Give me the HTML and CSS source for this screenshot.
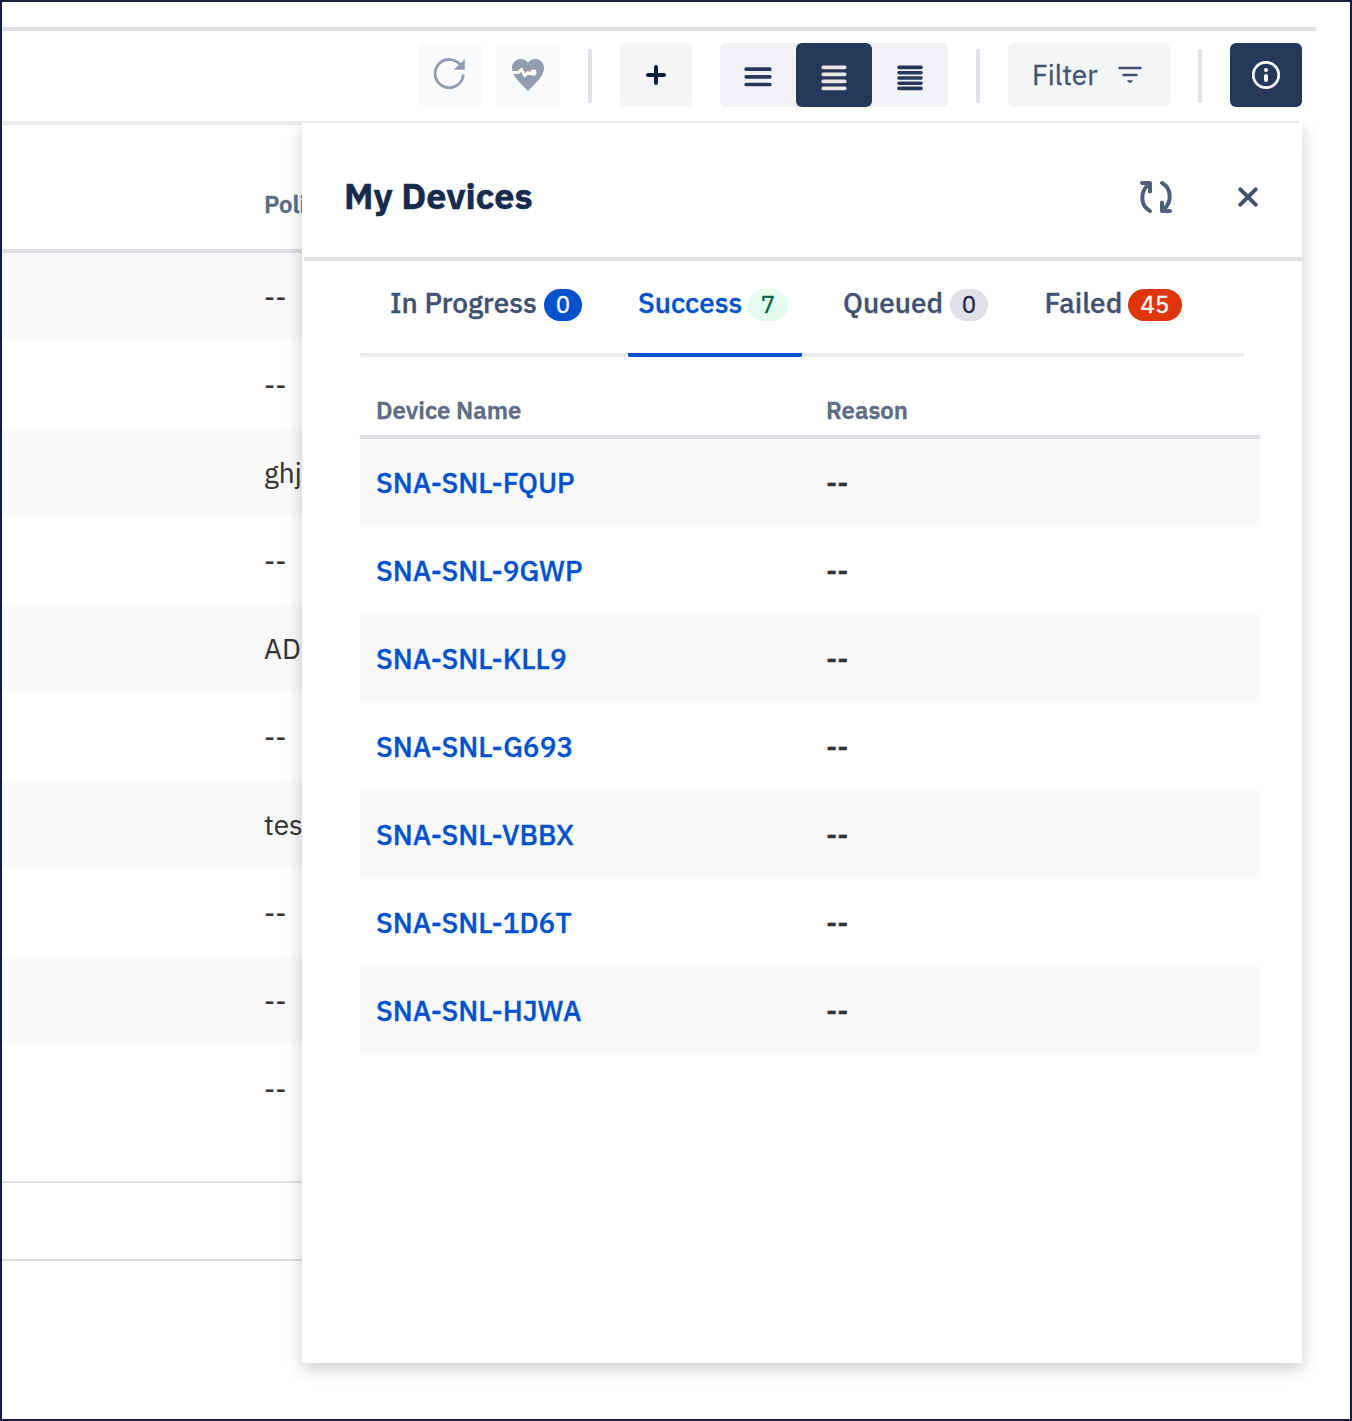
FILE: index.html
```html
<!DOCTYPE html>
<html lang="en">
<head>
<meta charset="utf-8">
<title>My Devices</title>
<link rel="stylesheet" href="styles.css">
</head>
<body>
<div class="page">
  <header class="toolbar">
    <button class="btn btn-small" aria-label="Reload">
      <svg width="64" height="64" viewBox="0 0 64 64"><path d="M43.300 23.300A14.100 14.100 0 1 0 45.300 31.500" fill="none" stroke="#919cae" stroke-width="2.800"/><path d="M46.800 16v10.800H35.800z" fill="#919cae"/></svg>
    </button>
    <button class="btn btn-small btn-next" aria-label="Health">
      <svg width="64" height="64" viewBox="0 0 64 64"><path d="M32 48C28 43 16 34.500 16 25C16 19.500 20 16 24.500 16C28 16 30.500 17.500 32 20C33.500 17.500 36 16 39.500 16C44 16 48 19.500 48 25C48 34.500 36 43 32 48z" fill="#919cae"/><path d="M15 29.500H22.500L25.500 26.300L28.700 33L31.800 29.500L34.500 30.800L37 29.500" fill="none" stroke="#fbfcfd" stroke-width="2.900" stroke-linejoin="round"/><circle cx="37.300" cy="29.600" r="3.200" fill="#fbfcfd"/></svg>
    </button>
    <i class="sep"></i>
    <button class="btn btn-mid" aria-label="Add">
      <svg width="72" height="64" viewBox="0 0 72 64"><path d="M36 24v16M28 32h16" stroke="#091e42" stroke-width="4" stroke-linecap="round"/></svg>
    </button>
    <div class="group">
      <button class="btn btn-view" aria-label="Comfortable rows">
        <svg width="76" height="64" viewBox="0 0 76 64"><path d="M26.200 26.200h23.600M26.200 33.800h23.600M26.200 41.500h23.600" stroke="#253858" stroke-width="3.700" stroke-linecap="round"/></svg>
      </button>
      <button class="btn btn-view btn-dark" aria-label="Default rows">
        <svg width="76" height="64" viewBox="0 0 76 64"><path d="M27.200 24.400h21.600M27.200 31.400h21.600M27.200 38.400h21.600M27.200 45.400h21.600" stroke="#e8e8e8" stroke-width="3.600" stroke-linecap="round"/></svg>
      </button>
      <button class="btn btn-view" aria-label="Compact rows">
        <svg width="76" height="64" viewBox="0 0 76 64"><path d="M27 24.400h22M27 29.700h22M27 35h22M27 40.200h22M27 45.400h22" stroke="#253858" stroke-width="3.600" stroke-linecap="round"/></svg>
      </button>
    </div>
    <i class="sep"></i>
    <button class="btn btn-filter"><span>Filter</span>
      <svg width="24" height="18" viewBox="0 0 24 18"><path d="M1.500 2h21M5.500 9h13" stroke="#42526e" stroke-width="2.500" stroke-linecap="round"/><path d="M10 14.200h4q1.500 0 .5 1l-1.400 1.400q-1.100.900-2.200 0L9.500 15.200q-1-1 .5-1z" fill="#42526e"/></svg>
    </button>
    <i class="sep"></i>
    <button class="btn btn-mid btn-dark" aria-label="Details">
      <svg width="72" height="64" viewBox="0 0 72 64"><circle cx="36" cy="32" r="12.700" fill="none" stroke="#fff" stroke-width="2.700"/><circle cx="36" cy="27" r="2.100" fill="#fff"/><path d="M36 33v4" stroke="#fff" stroke-width="4" stroke-linecap="round"/></svg>
    </button>
  </header>

  <main class="policies">
    <div class="policies-head">Policy</div>
    <div class="policy">--</div>
    <div class="policy">--</div>
    <div class="policy">ghjk</div>
    <div class="policy">--</div>
    <div class="policy">ADE</div>
    <div class="policy">--</div>
    <div class="policy">test</div>
    <div class="policy">--</div>
    <div class="policy">--</div>
    <div class="policy">--</div>
    <div class="pager"></div>
  </main>

  <aside class="panel">
    <div class="panel-head">
      <h1>My Devices</h1>
      <svg class="sync" width="36" height="36" viewBox="0 0 36 36" fill="none" stroke="#505f79" stroke-width="4" stroke-linecap="round" stroke-linejoin="round"><path d="M12 32C2.500 27 1.500 13 10.500 5.500M4 4H12V12.500"/><path d="M24 4C33.500 9 34.500 23 25.500 30.500M32 32H24V23.500"/></svg>
      <svg width="20" height="20" viewBox="0 0 20 20"><path d="M2.300 2.300l15.400 15.400M17.700 2.300L2.300 17.700" stroke="#42526e" stroke-width="4" stroke-linecap="round"/></svg>
    </div>
    <nav class="tabs">
      <div class="tab tab-progress"><span class="label">In Progress</span><b class="badge blue">0</b></div>
      <div class="tab tab-success"><span class="label">Success</span><b class="badge green">7</b></div>
      <div class="tab tab-queued"><span class="label">Queued</span><b class="badge gray">0</b></div>
      <div class="tab tab-failed"><span class="label">Failed</span><b class="badge red">45</b></div>
    </nav>
    <div class="devices">
      <div class="row row-head"><span>Device Name</span><span>Reason</span></div>
      <div class="row"><a>SNA-SNL-FQUP</a><span>--</span></div>
      <div class="row"><a>SNA-SNL-9GWP</a><span>--</span></div>
      <div class="row"><a>SNA-SNL-KLL9</a><span>--</span></div>
      <div class="row"><a>SNA-SNL-G693</a><span>--</span></div>
      <div class="row"><a>SNA-SNL-VBBX</a><span>--</span></div>
      <div class="row"><a>SNA-SNL-1D6T</a><span>--</span></div>
      <div class="row"><a>SNA-SNL-HJWA</a><span>--</span></div>
    </div>
  </aside>
</div>
</body>
</html>
```
FILE: styles.css
```css
* { box-sizing: border-box; }
body { margin: 0; font-family: "IBM Plex Sans", Roboto, sans-serif; font-size: 28px; color: #333; -webkit-text-stroke: 0.35px currentColor; }
svg { display: block; flex: none; }
.page { position: relative; width: 1352px; height: 1421px; border: 2px solid #161c40; background: #fff; padding-top: 25px; overflow: hidden; }

.toolbar { width: 1314px; height: 94px; border-top: 4px solid #dfe1e4; padding: 0 14px 2px 0; display: flex; align-items: center; justify-content: flex-end; gap: 28px; }
.btn { height: 64px; border: 0; border-radius: 6px; padding: 0; background: #f4f5f7; font: inherit; color: #42526e; display: flex; align-items: center; justify-content: center; }
.btn-small { width: 64px; background: #fafbfd; }
.btn-next { margin-left: -14px; }
.btn-mid { width: 72px; }
.group { display: flex; background: #f1f2f6; border-radius: 6px; }
.btn-view { width: 76px; background: #f1f2f6; }
.btn-dark { background: #253858; }
.btn-filter { width: 162px; padding: 0 28px 0 24px; justify-content: space-between; }
.btn-filter span { padding-bottom: 2px; }
.sep { width: 4px; height: 54px; margin-top: 2px; background: #dfe3e8; }

.policies { width: 1298px; border-top: 4px solid #ebebf0; }
.policies-head { height: 128px; border-bottom: 4px solid #dcdfe4; padding: 64px 0 0 262px; font-size: 24px; line-height: 30px; font-weight: 600; color: #5e6c84; }
.policy { height: 88px; padding-left: 262px; line-height: 88px; -webkit-text-stroke-width: 0.15px; }
.policy:nth-child(even) { background: #f9f9f9; }
.pager { margin-top: 48px; height: 80px; border-top: 2px solid #dde1e5; border-bottom: 2px solid #dde1e5; }

.panel { position: absolute; left: 300px; top: 121px; width: 1000px; height: 1240px; background: #fff; box-shadow: 0 6px 16px rgba(0, 0, 0, 0.2); clip-path: inset(0 -40px -40px -40px); }
.panel-head { width: 1000px; margin-left: 2px; height: 138px; border-bottom: 4px solid #e0e2e5; padding: 13px 46px 0 40px; display: flex; align-items: center; }
.panel-head h1 { margin: -1px auto 0 0; font-size: 36px; line-height: 44px; font-weight: 700; color: #172b4d; }
.sync { margin-right: 64px; }
.tabs { margin: 0 58px; width: 884px; height: 96px; display: flex; background: linear-gradient(#ebebf0, #ebebf0) bottom / 100% 4px no-repeat; border-radius: 2px; }
.tab { height: 96px; padding-top: 23px; display: flex; font-weight: 500; color: #42526e; }
.tab-progress { width: 268px; padding-left: 30px; }
.tab-success { width: 174px; padding-left: 10px; color: #0052cc; background: linear-gradient(#0052cc, #0052cc) bottom / 100% 4px no-repeat; border-radius: 2px; }
.tab-queued { width: 205px; padding-left: 41px; }
.tab-failed { padding-left: 37.5px; }
.label { line-height: 38px; white-space: nowrap; }
.tab-progress .label { width: 154px; }
.tab-success .label { width: 110px; }
.tab-queued .label { width: 107px; }
.tab-failed .label { width: 83.5px; }
.badge { margin-top: 5px; width: 38px; height: 32px; border-radius: 16px; font-size: 24px; line-height: 30px; font-weight: 400; text-align: center; }
.blue { background: #0052cc; color: #fff; }
.green { width: 40px; background: #e3fcef; color: #006644; }
.gray { background: #dfe1e6; color: #172b4d; }
.red { width: 54px; background: #de350b; color: #fff; }

.devices { margin: 22px 42px 0 58px; }
.row { height: 88px; display: grid; grid-template-columns: 450px 1fr; padding-left: 16px; line-height: 88px; font-weight: 500; }
.row:nth-child(even) { background: #f9f9f9; }
.row a { color: #0052cc; }
.row-head { height: 60px; border-bottom: 4px solid #dcdfe4; line-height: 62px; font-size: 24px; font-weight: 600; color: #5e6c84; }
```
